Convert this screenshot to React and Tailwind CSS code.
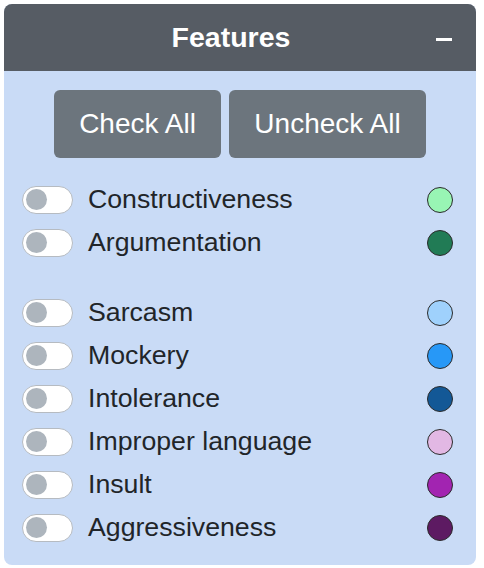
import React from "react";

const groups = [
  [
    { name: "Constructiveness", color: "#98f5b4" },
    { name: "Argumentation", color: "#217b55" },
  ],
  [
    { name: "Sarcasm", color: "#9fd1fc" },
    { name: "Mockery", color: "#2798f7" },
    { name: "Intolerance", color: "#135896" },
    { name: "Improper language", color: "#e2b8e4" },
    { name: "Insult", color: "#a224b1" },
    { name: "Aggressiveness", color: "#5d1a62" },
  ],
];

function Row({ name, color }) {
  return (
    <div className="flex h-[43px] items-center">
      <div className="flex h-[28px] w-[51px] shrink-0 items-center rounded-full border border-[#b6bbc1] bg-white px-[3px]">
        <div className="h-[21px] w-[21px] rounded-full bg-[#adb5bd]" />
      </div>
      <span className="ml-[15px] flex-1 text-[26.7px] leading-none text-[#212529]">{name}</span>
      <div className="mr-[5px] h-[26px] w-[26px] shrink-0 rounded-full border border-[#2a2a2a]" style={{ backgroundColor: color }} />
    </div>
  );
}

export default function App() {
  return (
    <div className="p-[4px] pr-[8px]" style={{ fontFamily: '"Liberation Sans", Arial, Helvetica, sans-serif' }}>
      <div className="w-[472px] overflow-hidden rounded-[8px] bg-[#c9dbf6]">
        <div className="relative flex h-[67px] items-center justify-center bg-[#565c64]">
          <span className="ml-[-18px] text-[28.5px] font-bold text-white">Features</span>
          <div className="absolute right-[24px] top-[34px] h-[3px] w-[16px] bg-white" />
        </div>
        <div className="px-[18px] pb-[16px] pt-[19px]">
          <div className="flex justify-center gap-[8px]">
            <button className="h-[68px] w-[167px] rounded-[6px] bg-[#6c757d] text-[28px] text-white">Check All</button>
            <button className="h-[68px] w-[197px] rounded-[6px] bg-[#6c757d] text-[28px] text-white">Uncheck All</button>
          </div>
          <div className="mt-[20px]">
            {groups[0].map((r) => (
              <Row key={r.name} {...r} />
            ))}
            <div className="h-[27px]" />
            {groups[1].map((r) => (
              <Row key={r.name} {...r} />
            ))}
          </div>
        </div>
      </div>
    </div>
  );
}
